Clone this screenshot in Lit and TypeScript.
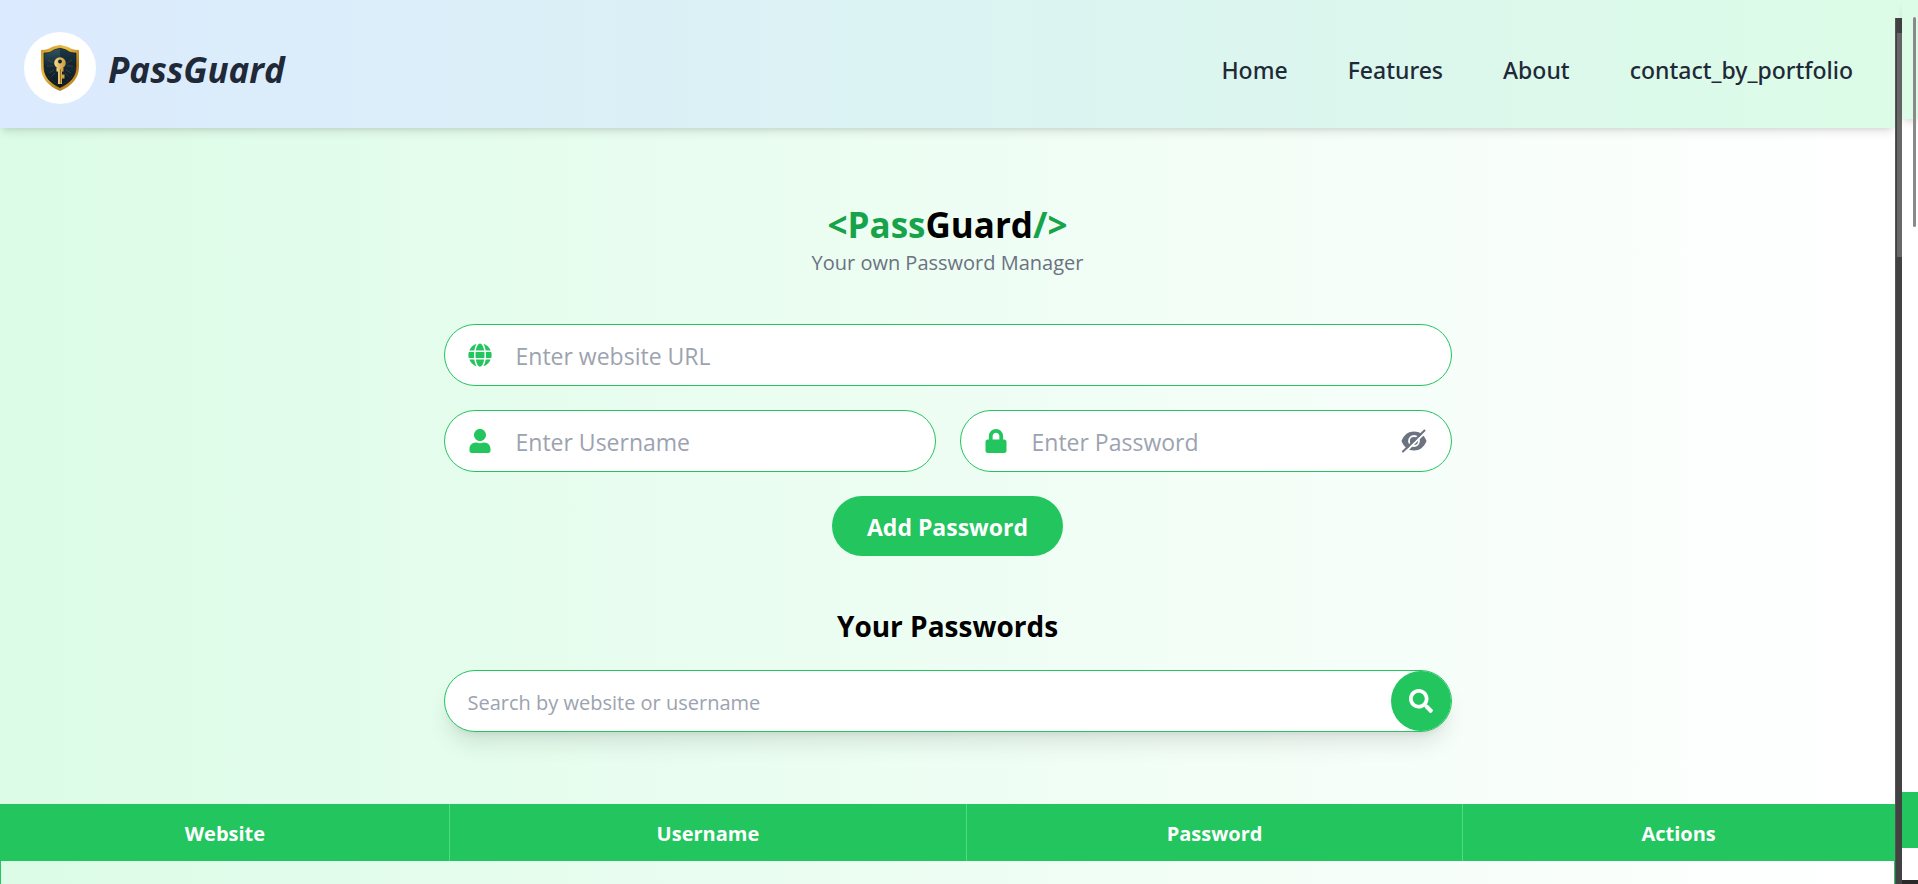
import { LitElement, html, css, svg } from "lit";
import { customElement } from "lit/decorators.js";

const NAV_LINKS = ["Home", "Features", "About", "contact_by_portfolio"];
const COLUMNS = ["Website", "Username", "Password", "Actions"];

const globe = svg`<path d="M336.5 160C322 70.7 287.8 8 248 8s-74 62.7-88.5 152h177zM152 256c0 22.2 1.2 43.5 3.3 64h185.3c2.1-20.5 3.3-41.8 3.3-64s-1.2-43.5-3.3-64H155.3c-2.1 20.5-3.3 41.8-3.3 64zm324.7-96c-28.6-67.9-86.5-120.4-158-141.6 24.4 33.8 41.2 84.7 50 141.6h108zM177.2 18.4C105.8 39.6 47.8 92.1 19.3 160h108c8.7-56.9 25.5-107.8 49.9-141.6zM487.4 192H372.7c2.1 21 3.3 42.5 3.3 64s-1.2 43-3.3 64h114.6c5.5-20.5 8.6-41.8 8.6-64s-3.1-43.5-8.5-64zM120 256c0-21.5 1.2-43 3.3-64H8.6C3.2 212.5 0 233.8 0 256s3.2 43.5 8.6 64h114.6c-2-21-3.2-42.5-3.2-64zm39.5 96c14.5 89.3 48.7 152 88.5 152s74-62.7 88.5-152h-177zm159.3 141.6c71.4-21.2 129.4-73.7 158-141.6h-108c-8.8 56.9-25.6 107.8-50 141.6zM19.3 352c28.6 67.9 86.5 120.4 158 141.6-24.4-33.8-41.2-84.7-50-141.6h-108z"/>`;
const user = svg`<path d="M224 256c70.7 0 128-57.3 128-128S294.7 0 224 0 96 57.3 96 128s57.3 128 128 128zm89.6 32h-16.7c-22.2 10.2-46.9 16-72.9 16s-50.6-5.8-72.9-16h-16.7C60.2 288 0 348.2 0 422.4V464c0 26.5 21.5 48 48 48h352c26.5 0 48-21.5 48-48v-41.6c0-74.2-60.2-134.4-134.4-134.4z"/>`;
const lock = svg`<path d="M400 224h-24v-72C376 68.2 307.8 0 224 0S72 68.2 72 152v72H48c-26.5 0-48 21.5-48 48v192c0 26.5 21.5 48 48 48h352c26.5 0 48-21.5 48-48V272c0-26.5-21.5-48-48-48zm-104 0H152v-72c0-39.7 32.3-72 72-72s72 32.3 72 72v72z"/>`;
const search = svg`<path d="M505 442.7L405.3 343c-4.5-4.5-10.6-7-17-7H372c27.6-35.3 44-79.7 44-128C416 93.1 322.9 0 208 0S0 93.1 0 208s93.1 208 208 208c48.3 0 92.7-16.4 128-44v16.3c0 6.4 2.5 12.5 7 17l99.7 99.7c9.4 9.4 24.6 9.4 33.9 0l28.3-28.3c9.4-9.4 9.4-24.6.1-34zM208 336c-70.7 0-128-57.2-128-128 0-70.7 57.2-128 128-128 70.7 0 128 57.2 128 128 0 70.7-57.2 128-128 128z"/>`;

@customElement("app-root")
export class AppRoot extends LitElement {
  static styles = css`
    :host {
      display: block;
      font-family: "Open Sans", "Noto Sans", sans-serif;
      color: #000;
    }
    *, *::before, *::after { box-sizing: border-box; }
    h1, h2, p { margin: 0; }
    input, button { font: inherit; border: 0; margin: 0; padding: 0; background: none; }
    button { cursor: pointer; }
    svg { display: block; }

    .frame {
      display: grid;
      grid-template-columns: minmax(0, 1fr) 7px 16px;
      height: 100vh;
      overflow: hidden;
      background: #fff;
    }
    .page {
      overflow: hidden;
      background: linear-gradient(to right, #dcfce7, #fff);
    }

    .top {
      display: flex;
      align-items: center;
      justify-content: space-between;
      padding: 32px 42px 24px 24px;
      background: linear-gradient(to right, #dbeafe, #dcfce7);
      box-shadow: 0 6px 9px -2px rgb(0 0 0 / 0.1), 0 3px 6px -3px rgb(0 0 0 / 0.1);
      color: #1f2937;
    }
    .brand { display: flex; align-items: center; gap: 12px; }
    .badge {
      display: grid;
      place-items: center;
      width: 72px;
      height: 72px;
      border-radius: 50%;
      background: #fff;
    }
    .brand-name { padding-top: 4px; font-size: 35px; line-height: 48px; font-weight: 700; font-style: italic; }
    .nav {
      display: flex;
      gap: 60px;
      padding-top: 3px;
      font-family: "Noto Sans", "Open Sans", sans-serif;
      font-size: 23px;
      line-height: 36px;
      font-weight: 500;
    }
    .nav a { color: inherit; text-decoration: none; }

    .content {
      display: flex;
      flex-direction: column;
      align-items: center;
      padding: 75px 24px 72px;
    }
    .title { font-size: 35px; line-height: 44px; font-weight: 700; }
    .accent { color: #16a34a; }
    .tagline { font-size: 20px; line-height: 32px; color: #6b7280; }

    .form {
      display: grid;
      grid-template-columns: 1fr 1fr;
      gap: 24px;
      width: 100%;
      max-width: 1008px;
      margin-top: 45px;
    }
    .field {
      display: flex;
      align-items: center;
      gap: 24px;
      height: 62px;
      padding: 0 24px 0 23px;
      border: 1px solid #22c55e;
      border-radius: 31px;
      background: #fff;
      color: #22c55e;
      font-size: 23px;
    }
    .wide { grid-column: 1 / -1; }
    .box {
      flex: 1;
      min-width: 0;
      align-self: stretch;
      padding-top: 2px;
      outline: 0;
      color: #000;
    }
    .box::placeholder { color: #9ca3af; opacity: 1; }
    .reveal { color: #6b7280; }
    .add {
      grid-column: 1 / -1;
      justify-self: center;
      height: 60px;
      padding: 2px 35px 0;
      border-radius: 30px;
      background: #22c55e;
      color: #fff;
      font-size: 23px;
      font-weight: 700;
    }

    .subtitle { margin-top: 49px; font-size: 28px; line-height: 42px; font-weight: 700; }
    .search {
      display: flex;
      width: 100%;
      max-width: 1008px;
      height: 62px;
      margin-top: 23px;
      padding-left: 23px;
      border: 1px solid #22c55e;
      border-radius: 31px;
      background: #fff;
      box-shadow: 0 15px 22px -4px rgb(0 0 0 / 0.1), 0 6px 9px -6px rgb(0 0 0 / 0.1);
      font-size: 20px;
    }
    .go {
      display: grid;
      place-items: center;
      width: 60px;
      height: 60px;
      border-radius: 50%;
      background: #22c55e;
      color: #fff;
    }

    .list {
      width: 100%;
      table-layout: fixed;
      border-collapse: collapse;
      border: 1px solid #22c55e;
    }
    .list th {
      height: 56px;
      padding: 2px 0 0;
      background: #22c55e;
      color: #fff;
      font-size: 20px;
      font-weight: 700;
      text-align: center;
    }
    .list th + th { border-left: 1px solid #4ade80; }
    .list td { height: 72px; }
    .c1 { width: 23.7%; }
    .c2 { width: 27.3%; }
    .c3 { width: 26.2%; }

    .track {
      display: flex;
      flex-direction: column;
      padding-top: 18px;
      background: #dcfce7;
    }
    .rail {
      flex: 1;
      padding: 15px 0 0 1px;
      background: #424242;
      border-left: 1px solid #555;
    }
    .rail-thumb { height: 224px; background: #686868; }

    .edge {
      position: relative;
      display: flex;
      flex-direction: column;
    }
    .edge-top {
      height: 119px;
      background: #dcfce7;
      box-shadow: 0 6px 9px -2px rgb(0 0 0 / 0.1), 0 3px 6px -3px rgb(0 0 0 / 0.1);
    }
    .edge-gap { flex: 1; }
    .edge-band { height: 56px; margin-bottom: 32px; background: #22c55e; }
    .edge-end { height: 4px; background: #2a2829; }
    .edge-thumb {
      position: absolute;
      top: 17px;
      right: 2px;
      width: 3px;
      height: 210px;
      border-radius: 2px;
      background: #8a8a8a;
    }
  `;

  private icon(shape: unknown, viewBox: string) {
    return html`<svg width="24" height="24" viewBox=${viewBox} fill="currentColor" aria-hidden="true">${shape}</svg>`;
  }

  private shield() {
    return html`
      <svg width="38" height="46" viewBox="0 0 38 46" aria-hidden="true">
        <defs>
          <linearGradient id="gold" x1="0" y1="0" x2="1" y2="1">
            <stop offset="0" stop-color="#c9942b" />
            <stop offset="0.35" stop-color="#e9bd45" />
            <stop offset="0.7" stop-color="#b57f1f" />
            <stop offset="1" stop-color="#e0ad3c" />
          </linearGradient>
          <linearGradient id="steel" x1="0" y1="0" x2="0" y2="1">
            <stop offset="0" stop-color="#2f5561" />
            <stop offset="0.45" stop-color="#152a36" />
            <stop offset="1" stop-color="#0d1822" />
          </linearGradient>
          <linearGradient id="brass" x1="0" y1="0" x2="1" y2="0">
            <stop offset="0" stop-color="#f6d98a" />
            <stop offset="1" stop-color="#c99a3c" />
          </linearGradient>
        </defs>
        <path d="M0 5C5 5 8 4 10 2.500C13 1 16 .5 19 0C22 .5 25 1 28 2.500C30 4 33 5 38 5V22C38 33 31 41 19 46C7 41 0 33 0 22Z" fill="url(#gold)" />
        <path d="M3 8C8 8 10 7 12 5.500C14 4.300 16 4 19 3.300C22 4 24 4.300 26 5.500C28 7 30 8 35 8V22C35 31.500 29 38 19 42.500C9 38 3 31.500 3 22Z" fill="url(#steel)" stroke="#1a1a12" stroke-width="0.7" />
        <path d="M19 3.500C22 4 24 4.300 26 5.500C28 7 30 8 35 8V22L19 16Z" fill="#0c1c28" opacity="0.5" />
        <g stroke="#8a7434" stroke-width="0.5" fill="none" opacity="0.6">
          <path d="M7 15l5 3M6 21h6M8 28l5-3M31 15l-5 3M32 21h-6M30 28l-5-3M10 32l4-4M28 32l-4-4" />
          <path d="M7 31C10 35 13 37 17 39M31 31C28 35 25 37 21 39" stroke-dasharray="1 1" />
        </g>
        <circle cx="19" cy="18" r="5.800" fill="url(#brass)" />
        <path d="M15.500 23h7v3.500h-7zM17 26h4v13h-4z" fill="url(#brass)" />
        <path d="M21 29.500h2.500v4H21z" fill="#d6a53e" />
        <path d="M19.500 24V38.500" stroke="#8a5f1c" stroke-width="0.8" />
        <circle cx="19" cy="16.500" r="1.900" fill="#12222c" />
      </svg>
    `;
  }

  private eyeSlash() {
    return html`
      <svg width="26" height="24" viewBox="0 0 26 24" aria-hidden="true">
        <path d="M0.500 12C3 5.500 7.500 2.500 13 2.500S23 5.500 25.500 12C23 18.500 18.500 21.500 13 21.500S3 18.500 0.500 12Z" fill="#6b7280" />
        <circle cx="13" cy="12" r="5" fill="none" stroke="#fff" stroke-width="1.800" />
        <path d="M3 24.500L25.500 2.200" stroke="#fff" stroke-width="2" />
        <path d="M2 22.500L23.500 1.500" stroke="#6b7280" stroke-width="2" stroke-linecap="round" />
      </svg>
    `;
  }

  render() {
    return html`
      <div class="frame">
        <div class="page">
          <header class="top">
            <div class="brand">
              <div class="badge">${this.shield()}</div>
              <span class="brand-name">PassGuard</span>
            </div>
            <nav class="nav">${NAV_LINKS.map((name) => html`<a href="#">${name}</a>`)}</nav>
          </header>

          <main class="content">
            <h1 class="title"><span class="accent">&lt;Pass</span>Guard<span class="accent">/&gt;</span></h1>
            <p class="tagline">Your own Password Manager</p>

            <form class="form" @submit=${(e: Event) => e.preventDefault()}>
              <label class="field wide">
                ${this.icon(globe, "0 0 496 512")}
                <input class="box" type="text" aria-label="Website URL" placeholder="Enter website URL" />
              </label>
              <label class="field">
                ${this.icon(user, "0 0 448 512")}
                <input class="box" type="text" aria-label="Username" placeholder="Enter Username" />
              </label>
              <div class="field">
                ${this.icon(lock, "0 0 448 512")}
                <input class="box" type="password" aria-label="Password" placeholder="Enter Password" />
                <button class="reveal" type="button" aria-label="Show password">${this.eyeSlash()}</button>
              </div>
              <button class="add" type="submit">Add Password</button>
            </form>

            <h2 class="subtitle">Your Passwords</h2>
            <div class="search">
              <input class="box" type="text" aria-label="Search passwords" placeholder="Search by website or username" />
              <button class="go" type="button" aria-label="Search">${this.icon(search, "0 0 512 512")}</button>
            </div>
          </main>

          <table class="list">
            <colgroup><col class="c1" /><col class="c2" /><col class="c3" /><col /></colgroup>
            <thead>
              <tr>${COLUMNS.map((name) => html`<th scope="col">${name}</th>`)}</tr>
            </thead>
            <tbody>
              <tr><td colspan="4"></td></tr>
            </tbody>
          </table>
        </div>

        <div class="track"><div class="rail"><div class="rail-thumb"></div></div></div>
        <div class="edge">
          <div class="edge-top"></div>
          <div class="edge-gap"></div>
          <div class="edge-band"></div>
          <div class="edge-end"></div>
          <div class="edge-thumb"></div>
        </div>
      </div>
    `;
  }
}
